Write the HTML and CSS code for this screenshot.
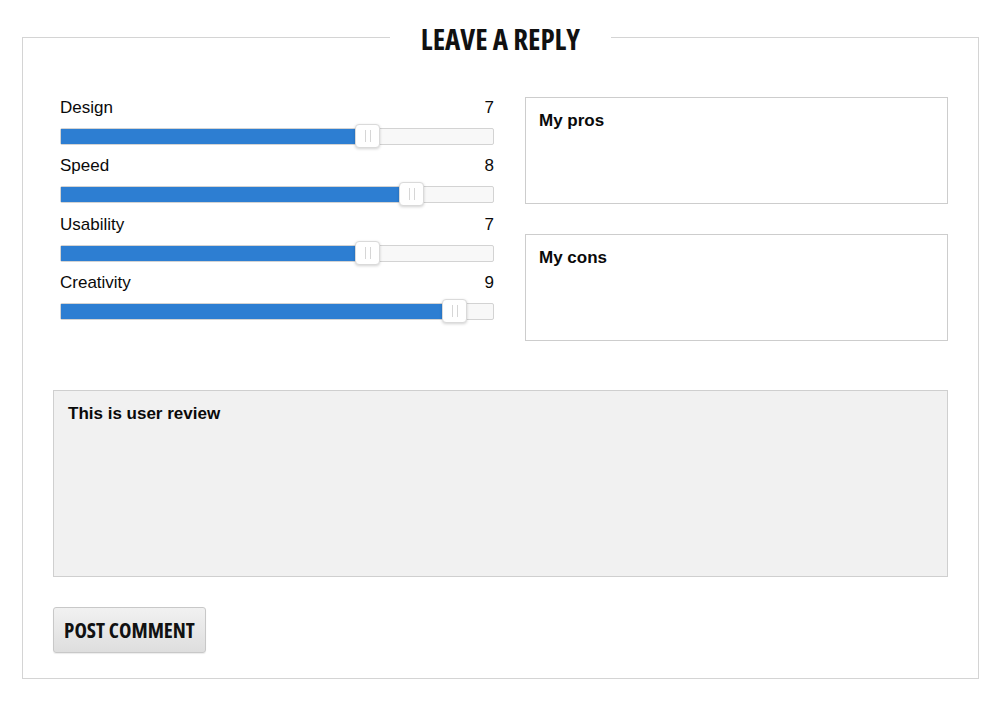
FILE: index.html
```html
<!DOCTYPE html>
<html>
<head>
<meta charset="utf-8">
<link rel="stylesheet" href="styles.css">
</head>
<body>
<div class="page">
  <fieldset class="reply">
    <legend class="reply-title">LEAVE A REPLY</legend>
    <div class="top">
      <div class="ratings">
        <div class="rating">
          <div class="rating-head"><span>Design</span><span>7</span></div>
          <div class="track"><div class="fill" style="width:70%"></div><div class="handle" style="left:70%"></div></div>
        </div>
        <div class="rating">
          <div class="rating-head"><span>Speed</span><span>8</span></div>
          <div class="track"><div class="fill" style="width:80%"></div><div class="handle" style="left:80%"></div></div>
        </div>
        <div class="rating">
          <div class="rating-head"><span>Usability</span><span>7</span></div>
          <div class="track"><div class="fill" style="width:70%"></div><div class="handle" style="left:70%"></div></div>
        </div>
        <div class="rating">
          <div class="rating-head"><span>Creativity</span><span>9</span></div>
          <div class="track"><div class="fill" style="width:90%"></div><div class="handle" style="left:90%"></div></div>
        </div>
      </div>
      <div class="proscons">
        <div class="box">My pros</div>
        <div class="box">My cons</div>
      </div>
    </div>
    <div class="review">This is user review</div>
    <button class="submit">POST COMMENT</button>
  </fieldset>
</div>
</body>
</html>
```
FILE: styles.css
```css
html, body {
  margin: 0;
  padding: 0;
  background: #fff;
}
.page {
  padding: 18px 20px 0 22px;
  font-family: "Liberation Sans", Arial, sans-serif;
  color: #111;
}
.reply {
  width: 957px;
  min-width: 0;
  margin: 0;
  border: 1px solid #d4d4d4;
  padding: 41px 30px 25px 30px;
  box-sizing: border-box;
}
.reply-title {
  margin: 0 auto;
  padding: 4px 31px 0;
  font-family: "Open Sans", sans-serif;
  font-weight: 700;
  font-stretch: 75%;
  font-size: 29px;
  line-height: 34px;
  color: #111;
}
.top {
  display: grid;
  grid-template-columns: 441px 1fr;
  column-gap: 31px;
}
.ratings {
  padding: 1px 0 0 7px;
  display: flex;
  flex-direction: column;
  gap: 11.3px;
}
.rating-head {
  display: flex;
  justify-content: space-between;
  font-size: 17px;
  line-height: 20px;
  height: 20px;
  color: #0a0a0a;
}
.track {
  position: relative;
  margin-top: 10px;
  height: 15px;
  border: 1px solid #d3d3d3;
  background: #f8f8f8;
  border-radius: 2px;
}
.fill {
  height: 100%;
  background: #2d7ed2;
}
.handle {
  position: absolute;
  top: -5px;
  margin-left: -8px;
  width: 23px;
  height: 22px;
  background: #fff;
  border: 1px solid #dadada;
  border-radius: 4px;
  box-shadow: 0 1px 3px rgba(0,0,0,0.18);
}
.handle::before,
.handle::after {
  content: "";
  position: absolute;
  top: 5px;
  width: 1px;
  height: 12px;
  background: #d6d6d6;
}
.handle::before { left: 9px; }
.handle::after { left: 14px; }
.proscons {
  display: flex;
  flex-direction: column;
  gap: 30px;
}
.box {
  height: 107px;
  border: 1px solid #cdcdcd;
  padding: 13px 13px;
  box-sizing: border-box;
  font-size: 17px;
  font-weight: 700;
  line-height: 20px;
  color: #0a0a0a;
}
.review {
  margin-top: 49px;
  height: 187px;
  box-sizing: border-box;
  border: 1px solid #cfcfcf;
  background: #f1f1f1;
  padding: 13px 14px;
  font-size: 17px;
  font-weight: 700;
  line-height: 20px;
  color: #0a0a0a;
}
.submit {
  display: block;
  margin-top: 30px;
  width: 153px;
  height: 46px;
  border: 1px solid #c8c8c8;
  border-radius: 3px;
  background: linear-gradient(#f1f1f1, #dedede);
  font-family: "Open Sans", sans-serif;
  font-weight: 700;
  font-stretch: 75%;
  font-size: 21px;
  color: #111;
  padding: 0;
  box-shadow: 0 1px 1px rgba(0,0,0,0.08);
}
```
